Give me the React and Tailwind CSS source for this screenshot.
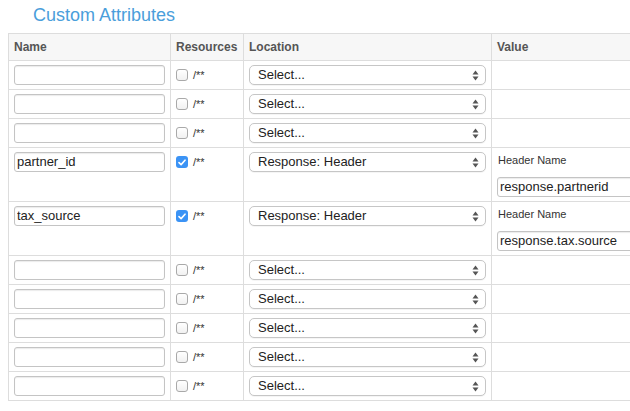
import React from 'react';

const rows = [
    { name: '', checked: false },
    { name: '', checked: false },
    { name: '', checked: false },
    { name: 'partner_id', checked: true, location: 'Response: Header', header: 'response.partnerid' },
    { name: 'tax_source', checked: true, location: 'Response: Header', header: 'response.tax.source' },
    { name: '', checked: false },
    { name: '', checked: false },
    { name: '', checked: false },
    { name: '', checked: false },
    { name: '', checked: false },
];

const Checkbox = ({ checked }) =>
    checked ? (
        <span className="w-[12px] h-[12px] rounded-[3px] bg-[#3b93f5] flex items-center justify-center">
            <svg width="8" height="7" viewBox="0 0 8 7">
                <path d="M1 3.6 L3.1 5.6 L7 1.2" fill="none" stroke="white" strokeWidth="1.6" strokeLinecap="round" strokeLinejoin="round" />
            </svg>
        </span>
    ) : (
        <span className="w-[12px] h-[12px] rounded-[3px] border border-[#a9a9a9] bg-gradient-to-b from-white to-[#f1f1f1]" />
    );

const SelectBox = ({ value }) => (
    <div className="w-full h-[20px] rounded-[5px] border border-[#c6c6c6] bg-white shadow-[0_1px_0_rgba(0,0,0,0.04)] flex items-center justify-between pl-[8px] pr-[6px] text-[13px] text-[#222]">
        <span>{value || 'Select...'}</span>
        <svg width="7" height="11" viewBox="0 0 7 11">
            <path d="M0.5 4.5 L3.5 0.5 L6.5 4.5 Z" fill="#555" />
            <path d="M0.5 6.5 L6.5 6.5 L3.5 10.5 Z" fill="#555" />
        </svg>
    </div>
);

const TextInput = ({ value, className }) => (
    <input
        readOnly
        value={value}
        className={
            'block h-[20px] rounded-[3px] border border-[#c4c4c4] bg-white shadow-[inset_0_1px_1px_rgba(0,0,0,0.08)] px-[2px] text-[13px] text-[#222] outline-none ' +
            (className || '')
        }
    />
);

const App = () => {
    return (
        <div className="w-[630px] h-[411px] overflow-hidden bg-white font-['Liberation_Sans',Arial,sans-serif]">
            <div className="h-[33px] pt-[5px] pl-[33px] text-[18px] leading-[20px] text-[#4a9edb]">Custom Attributes</div>
            <div className="pl-[8px]">
                <table className="table-fixed border-collapse w-[720px]">
                    <colgroup>
                        <col className="w-[162px]" />
                        <col className="w-[73px]" />
                        <col className="w-[248px]" />
                        <col />
                    </colgroup>
                    <thead>
                        <tr className="bg-[#f7f7f7]">
                            {['Name', 'Resources', 'Location', 'Value'].map((h) => (
                                <th key={h} className="border border-[#dddddd] px-[5px] py-[4px] text-left text-[12px] leading-[18px] font-bold text-[#555]">
                                    {h}
                                </th>
                            ))}
                        </tr>
                    </thead>
                    <tbody>
                        {rows.map((r, i) => (
                            <tr key={i}>
                                <td className="border border-[#dddddd] px-[5px] py-[4px] align-top leading-[20px]">
                                    <TextInput value={r.name} className="w-full" />
                                </td>
                                <td className="border border-[#dddddd] px-[5px] py-[4px] align-top leading-[20px]">
                                    <div className="h-[20px] flex items-center gap-[5px] text-[11px] text-[#333]">
                                        <Checkbox checked={r.checked} />
                                        <span>/**</span>
                                    </div>
                                </td>
                                <td className="border border-[#dddddd] px-[5px] py-[4px] align-top leading-[20px]">
                                    <SelectBox value={r.location} />
                                </td>
                                <td className="border border-[#dddddd] px-[5px] py-[4px] align-top leading-[20px]">
                                    {r.header && (
                                        <div className="flex flex-col">
                                            <span className="text-[11px] leading-[16px] text-[#333] pl-[1px] mb-[9px]">Header Name</span>
                                            <TextInput value={r.header} className="w-[170px]" />
                                        </div>
                                    )}
                                </td>
                            </tr>
                        ))}
                    </tbody>
                </table>
            </div>
        </div>
    );
};

export default App;
